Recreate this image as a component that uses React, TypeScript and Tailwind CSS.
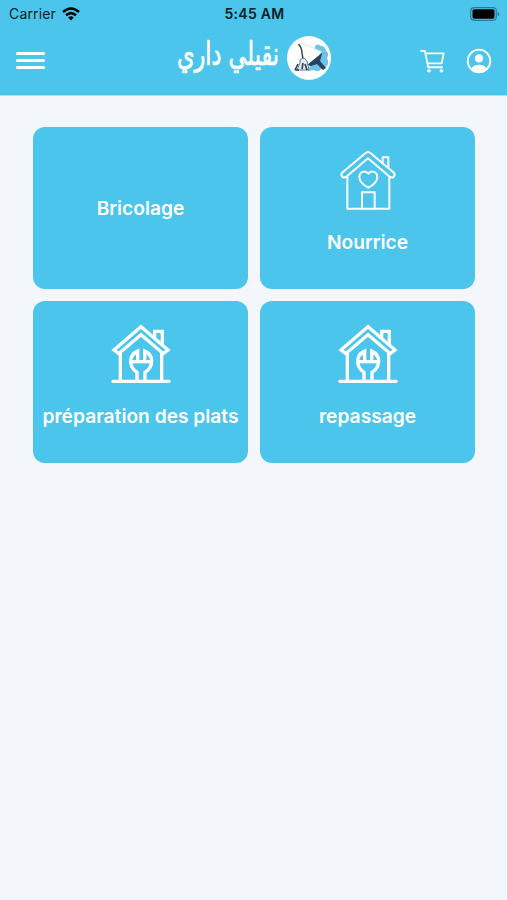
import type { ReactNode } from 'react';

interface Service {
  label: string;
  icon?: ReactNode;
}

const HouseHeart = () => (
  <svg viewBox="0 0 180 180" className="w-[60px] h-[60px]" fill="none" stroke="currentColor" strokeWidth="6" strokeLinejoin="round" strokeLinecap="round">
    <path d="M90 6Q86 6 82 10L14 67Q7 73 12 79Q17 86 25 80L90 25L155 80Q163 86 168 79Q173 73 166 67L98 10Q94 6 90 6Z" />
    <path d="M134 36V22H151V53" />
    <path d="M28 82V176H154V82" />
    <path d="M72 176V127H110V176" />
    <path d="M91 113C79 107 64 97 64 81C64 64 83 60 91 71C99 60 118 64 118 81C118 97 103 107 91 113Z" />
  </svg>
);

const HouseWrench = () => (
  <svg viewBox="0 0 180 180" className="w-[60px] h-[60px]" fill="none" stroke="currentColor" strokeWidth="10">
    <path d="M90 8L9 78L23 89L90 32L157 89L171 78Z" />
    <path d="M131 39V22H154V59" />
    <path d="M28 86V171M152 86V171" />
    <path d="M6 172H174" strokeLinecap="round" />
    <path d="M78 171V145C70 140 59 129 59 111C59 99 66 87 80 81V112M102 171V145C110 140 122 129 122 111C122 99 115 87 101 81V112" />
    <path d="M59 113H122" />
    <path d="M66 98L78 84V108M115 98L103 84V108" strokeWidth="4" />
  </svg>
);

const Logo = () => (
  <svg viewBox="0 0 44 44" className="w-11 h-11 shrink-0">
    <circle cx="22" cy="22" r="22" fill="#fff" />
    <path d="M28 10Q31 7 34 10Q38 10 39 15Q43 17 40 22Q43 28 39 31L34 33Q31 37 27 34L21 35L24 28L33 18L28 14Z" fill="#6bc3e9" />
    <path d="M13 7L35 16L21 30L17 22Z" fill="#fff" />
    <path d="M14 7L34 15" stroke="#c5e3ef" strokeWidth=".8" />
    <path d="M11.5 8Q15 12 15 17L16 23" fill="none" stroke="#354557" strokeWidth="1.5" />
    <path d="M35.5 16.5L20 29L24 30L30 28L36 34L39 32L33 25Z" fill="#24445f" />
    <path d="M13 24Q17 20 20 25L22 34H10L13 27Z" fill="#e4edf2" stroke="#65798b" strokeWidth="1" />
    <path d="M8 34L11 28M8 34H12M15 33L16 27M20 34L18 28" fill="none" stroke="#2c3e55" strokeWidth="1.6" />
    <circle cx="4.5" cy="26" r=".6" fill="#8fb8cd" />
  </svg>
);

const StatusBar = () => (
  <div className="grid grid-cols-3 items-center h-[27px] pl-[9px] pr-[7px] text-[#071c24] text-[14px]">
    <div className="flex items-center gap-[6px]">
      <span className="tracking-[0.15px]">Carrier</span>
      <svg viewBox="0 0 18 14" className="w-[18px] h-[14px]" fill="none" stroke="#000" strokeWidth="2.5">
        <path d="M1 5Q9-2 17 5" />
        <path d="M4 8.3Q9 4 14 8.3" />
        <path d="M6.2 10.6Q9 8 11.8 10.6L9 13.5Z" fill="#000" stroke="none" />
      </svg>
    </div>
    <span className="text-center font-semibold tracking-[0.3px]">5:45 AM</span>
    <svg viewBox="0 0 30 14" className="w-[30px] h-[14px] justify-self-end">
      <rect x=".7" y=".7" width="25.6" height="12.6" rx="3.5" fill="none" stroke="#287c98" strokeWidth="1.2" />
      <rect x="2.5" y="2.3" width="22" height="9.4" rx="1.8" fill="#000" />
      <path d="M27.7 5Q29.5 5.7 29.5 7Q29.5 8.3 27.7 9Z" fill="#287c98" />
    </svg>
  </div>
);

const Header = () => (
  <header className="h-24 bg-[#4bc5ec] border-b border-[#a6e1f4]">
    <StatusBar />
    <div className="grid grid-cols-[1fr_auto_1fr] items-center h-[60px] mt-px pl-4 pr-4 text-white">
      <button className="flex flex-col gap-[4.5px] w-[29px] mt-[5px]" aria-label="Menu">
        <span className="h-[2.5px] w-full rounded-full bg-white" />
        <span className="h-[2.5px] w-full rounded-full bg-white" />
        <span className="h-[2.5px] w-full rounded-full bg-white" />
      </button>
      <div className="flex items-center gap-[7px]">
        <svg viewBox="0 0 104 44" className="w-[104px] h-11 overflow-visible">
          <text x="1" y="24.5" transform="scale(1 1.2)" direction="ltr" textLength="102" lengthAdjust="spacingAndGlyphs" fill="#fff" stroke="#fff" strokeWidth=".6" className="font-['DejaVu_Sans',sans-serif] text-[27px]">نقيلي داري</text>
        </svg>
        <Logo />
      </div>
      <div className="flex items-center justify-end gap-[22px] mt-[5px]">
        <svg viewBox="0 0 76 72" className="w-[25px] h-6" fill="none" stroke="currentColor" strokeWidth="5.5" strokeLinecap="round" strokeLinejoin="round">
          <path d="M3 5H15L25 55H67" />
          <path d="M17 13H72L66 43H23" />
          <circle cx="27" cy="66" r="4" fill="currentColor" strokeWidth="3" />
          <circle cx="65" cy="66" r="4" fill="currentColor" strokeWidth="3" />
        </svg>
        <svg viewBox="0 0 24 24" className="w-6 h-6 overflow-visible">
          <circle cx="12" cy="12" r="11.3" fill="none" stroke="currentColor" strokeWidth="1.8" />
          <circle cx="12" cy="9.4" r="4.2" fill="currentColor" />
          <path d="M4.3 19.8Q6 15.8 12 15.8Q18 15.8 19.7 19.8Q16 23 12 23Q8 23 4.3 19.8Z" fill="currentColor" />
        </svg>
      </div>
    </div>
  </header>
);

const ServiceCard = ({ label, icon }: Service) => (
  <div className="flex flex-col items-center justify-center h-[162px] rounded-xl bg-[#4bc5ec] text-white">
    {icon}
    <p className={`text-[19.2px] leading-6 font-semibold whitespace-nowrap ${icon ? 'mt-5 mb-3' : ''}`}>{label}</p>
  </div>
);

const services: Service[] = [
  { label: 'Bricolage' },
  { label: 'Nourrice', icon: <HouseHeart /> },
  { label: 'préparation des plats', icon: <HouseWrench /> },
  { label: 'repassage', icon: <HouseWrench /> },
];

export default function App() {
  return (
    <div className="h-[900px] bg-[#f3f6fb] font-['Inter',sans-serif]">
      <Header />
      <main className="grid grid-cols-2 gap-x-3 gap-y-[12px] pl-[33px] pr-8 pt-[31px]">
        {services.map((service) => (
          <ServiceCard key={service.label} {...service} />
        ))}
      </main>
    </div>
  );
}
